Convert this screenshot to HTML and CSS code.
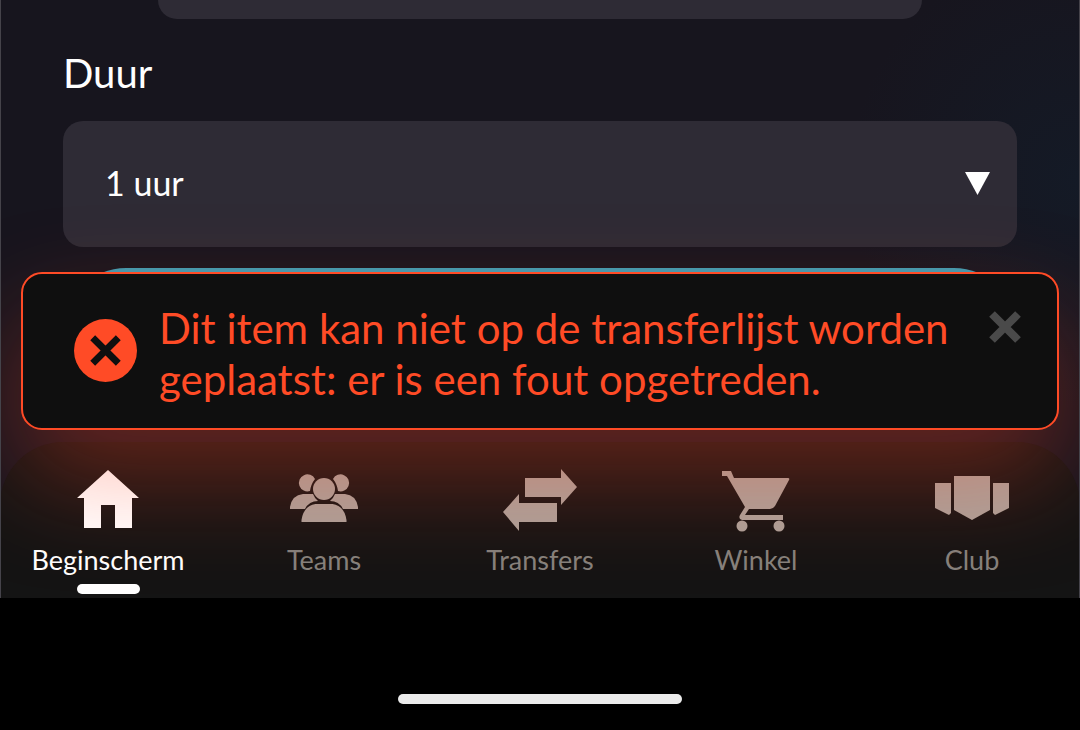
FILE: index.html
```html
<!DOCTYPE html>
<html lang="nl">
<head>
  <meta charset="UTF-8">
  <meta name="viewport" content="width=device-width, initial-scale=1.0">
  <link rel="stylesheet" href="styles.css">
  <title>Transferlijst</title>
</head>
<body>
  <div class="screen">
    <!-- Listing form -->
    <form class="listing-form">
      <input class="price-field" type="text" aria-label="Prijs">
      <label class="field-label" for="duration">Duur</label>
      <div class="select-wrap">
        <select class="duration-select" id="duration">
          <option>1 uur</option>
        </select>
        <svg class="select-arrow" viewBox="0 0 26 24" aria-hidden="true"><path d="M0 0h25L12.500 23z"/></svg>
      </div>
      <button class="list-button" type="button" aria-label="Plaatsen"></button>
    </form>

    <!-- Bottom navigation -->
    <nav class="tab-bar">
      <a class="tab active" href="#">
        <svg class="tab-icon" viewBox="0 0 80 64" aria-hidden="true">
          <path d="M40 2L71 30H64V60H47V37H33V60H16V30H9z"/>
        </svg>
        <span class="tab-label">Beginscherm</span>
      </a>
      <a class="tab" href="#">
        <svg class="tab-icon" viewBox="0 0 80 64" aria-hidden="true">
          <path d="M31 11a8.500 8.500 0 1 0-5 12q1-7 5-12zM49 11a8.500 8.500 0 1 1 5 12q-1-7-5-12z"/>
          <circle cx="40" cy="21" r="11"/>
          <path d="M6 41v-2q2-12 13-13h10q2 5 5 7-9 0-13 8zM74 41v-2q-2-12-13-13h-10q-2 5-5 7 9 0 13 8z"/>
          <path d="M17.500 54v-2q2-14 14-16h17q12 2 14 16v2z"/>
        </svg>
        <span class="tab-label">Teams</span>
      </a>
      <a class="tab" href="#">
        <svg class="tab-icon" viewBox="0 0 80 64" aria-hidden="true">
          <path d="M25 10H61V1L77 19 61 37V29H25zM57 35V54H19V63L3 44 19 26V35z"/>
        </svg>
        <span class="tab-label">Transfers</span>
      </a>
      <a class="tab" href="#">
        <svg class="tab-icon" viewBox="0 0 80 64" aria-hidden="true">
          <path d="M6 3h9l3 7h54q2 0 1 2L59 38q-2 3-5 3H33l-4 6h38v5H26q-4-1-2-5l5-8L11 8H6z"/>
          <circle cx="26" cy="58" r="5.500"/>
          <circle cx="63" cy="58" r="5.500"/>
        </svg>
        <span class="tab-label">Winkel</span>
      </a>
      <a class="tab" href="#">
        <svg class="tab-icon" viewBox="0 0 80 64" aria-hidden="true">
          <path d="M22 8H58V42L40 52 22 42zM3 15H19V45L17 47 3 40zM61 15H77V40L63 47 61 45z"/>
        </svg>
        <span class="tab-label">Club</span>
      </a>
    </nav>

    <!-- Error notification -->
    <div class="toast" role="alert">
      <svg class="toast-icon" viewBox="0 0 64 64" aria-hidden="true">
        <circle class="toast-icon-disc" cx="32" cy="32" r="32"/>
        <path class="toast-icon-cross" d="M19 19L45 45M45 19L19 45"/>
      </svg>
      <p class="toast-text">Dit item kan niet op de transferlijst worden geplaatst: er is een fout opgetreden.</p>
      <button class="toast-close" type="button" aria-label="Sluiten">
        <svg class="close-icon" viewBox="0 0 32 32" aria-hidden="true"><path d="M3 3L29 29M29 3L3 29"/></svg>
      </button>
    </div>
  </div>

  <footer class="system-bar">
    <div class="home-indicator"></div>
  </footer>
</body>
</html>
```

FILE: styles.css
```css
* {
  box-sizing: border-box;
}

body {
  margin: 0;
  min-height: 100vh;
  display: flex;
  flex-direction: column;
  background: #000;
  color: #fff;
  font-family: Lato, sans-serif;
}

.screen {
  position: relative;
  overflow: hidden;
  border: solid #45434a;
  border-width: 0 1px;
  background: radial-gradient(circle at 100% 30%, #141a26, transparent 20%), #17151e;
}

.listing-form {
  display: flex;
  flex-direction: column;
  padding: 0 62px 48px;
}

.price-field {
  align-self: center;
  width: 80%;
  height: 19px;
  border: 0;
  border-radius: 0 0 20px 20px;
  background: #2e2b35;
  color: #fff;
}

.field-label {
  margin: 30px 0 24px;
  font-size: 40px;
  line-height: 48px;
}

.select-wrap {
  display: grid;
  align-items: center;
  margin-bottom: 21px;
}

.duration-select {
  grid-area: 1 / 1;
  appearance: none;
  height: 126px;
  padding: 0 42px 4px;
  border: 0;
  border-radius: 20px;
  background: #2e2b35;
  color: #fff;
  font-family: inherit;
  font-size: 34px;
}

.select-arrow {
  grid-area: 1 / 1;
  justify-self: end;
  width: 26px;
  height: 24px;
  margin-right: 26px;
  fill: #fff;
  pointer-events: none;
}

.list-button {
  height: 126px;
  border: 0;
  border-radius: 63px;
  background: #3f9db3;
}

/* Tabs */
.tab-bar {
  display: grid;
  grid-template-columns: repeat(5, 1fr);
  height: 156px;
  margin: 0 -1px;
  border-radius: 63px 63px 0 0;
  background: #141414;
}

.tab {
  display: flex;
  flex-direction: column;
  align-items: center;
  padding-top: 26px;
  color: #85827d;
  text-decoration: none;
}

.tab-icon {
  width: 80px;
  height: 64px;
  fill: #aba29b;
}

.tab-label {
  margin-top: 12px;
  font-size: 27px;
  line-height: 32px;
}

.tab.active {
  color: #fff;
}

.tab.active .tab-icon {
  fill: #fff;
}

.tab.active::after {
  content: "";
  width: 63px;
  height: 10px;
  margin-top: 8px;
  border-radius: 5px;
  background: #fff;
}

/* Toast */
.toast {
  position: absolute;
  right: 20px;
  bottom: 168px;
  left: 20px;
  display: flex;
  align-items: center;
  gap: 22px;
  padding: 29px 36px 23px 51px;
  border: 2px solid #ff4b26;
  border-radius: 21px;
  background: #0f0f0f;
  box-shadow: 0 48px 105px rgba(255, 68, 34, 0.34);
}

.toast-icon {
  flex: none;
  width: 63px;
  height: 63px;
  margin-bottom: 8px;
}

.toast-icon-disc {
  fill: #ff4b26;
}

.toast-icon-cross {
  stroke: #0f0f0f;
  stroke-width: 7;
}

.toast-text {
  flex: 1;
  margin: 0;
  color: #ff4b26;
  font-size: 42px;
  line-height: 51px;
}

.toast-close {
  align-self: flex-start;
  display: flex;
  margin-top: 8px;
  padding: 0;
  border: 0;
  background: none;
}

.close-icon {
  width: 32px;
  height: 32px;
  stroke: #4a4a4a;
  stroke-width: 8;
}

/* System area */
.system-bar {
  flex: 1;
  display: flex;
  align-items: flex-end;
  justify-content: center;
  padding: 96px 0 26px;
}

.home-indicator {
  width: 284px;
  height: 10px;
  border-radius: 5px;
  background: #ebebeb;
}
```
